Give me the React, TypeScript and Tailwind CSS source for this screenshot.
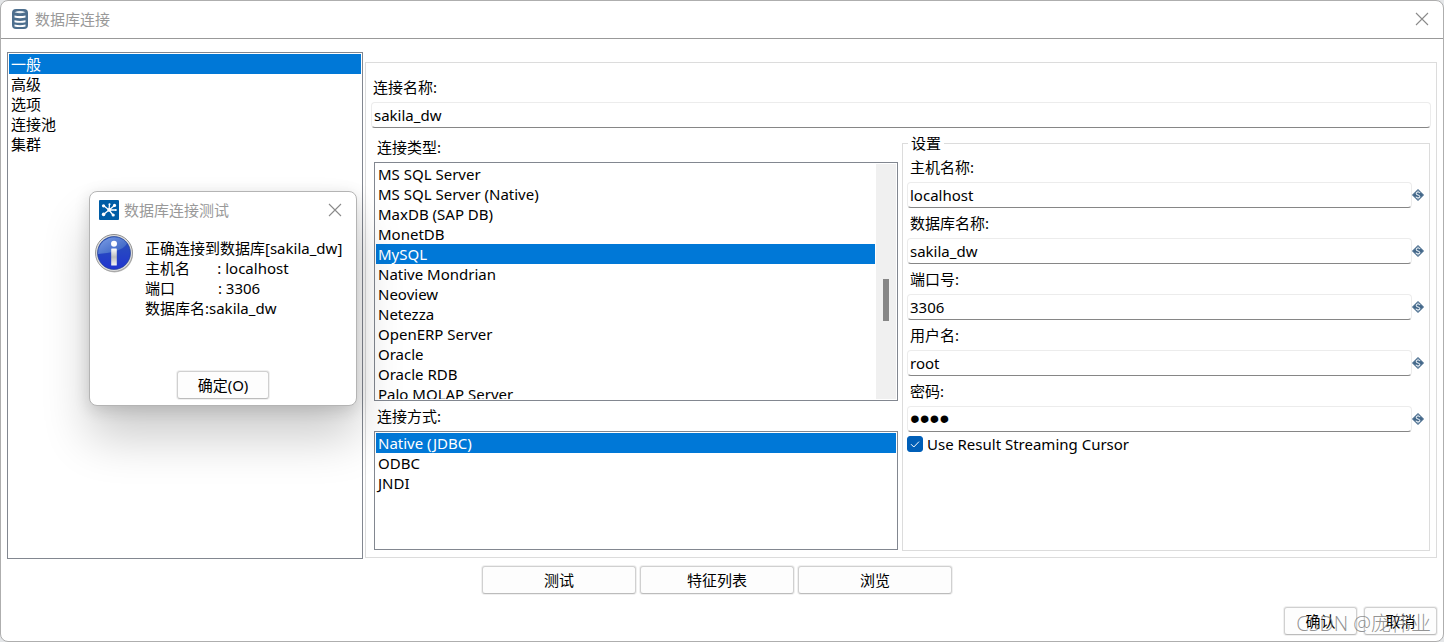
import { useState, type ReactNode } from 'react';

const sections = ['一般', '高级', '选项', '连接池', '集群'];

const connectionTypes = [
  'MS SQL Server',
  'MS SQL Server (Native)',
  'MaxDB (SAP DB)',
  'MonetDB',
  'MySQL',
  'Native Mondrian',
  'Neoview',
  'Netezza',
  'OpenERP Server',
  'Oracle',
  'Oracle RDB',
  'Palo MOLAP Server',
];

const accessMethods = ['Native (JDBC)', 'ODBC', 'JNDI'];

const settings = [
  { id: 'host', label: '主机名称:', value: 'localhost', type: 'text' },
  { id: 'database', label: '数据库名称:', value: 'sakila_dw', type: 'text' },
  { id: 'port', label: '端口号:', value: '3306', type: 'text' },
  { id: 'user', label: '用户名:', value: 'root', type: 'text' },
  { id: 'password', label: '密码:', value: 'root', type: 'password' },
];

const inputClass =
  'h-[26px] w-full min-w-0 flex-1 rounded-sm border border-[#ececec] border-b-[#868686] bg-white px-[2px] outline-none';

function DatabaseIcon() {
  return (
    <svg width="18" height="20" viewBox="0 0 18 20" aria-hidden="true">
      <rect x="1" y="0" width="16" height="20" rx="4" fill="#4d6f8e" />
      <path d="M3.5 3.2Q9 .8 14.5 3.2Q9 5.2 3.5 3.2Z" fill="#e9eff4" />
      <path d="M3.5 6.4Q9 7.8 14.5 6.4V8.6Q9 9.8 3.5 8.6Z" fill="#fff" />
      <path d="M3.5 11.2Q9 12.6 14.5 11.2V13.2Q9 14.4 3.5 13.2Z" fill="#fff" />
      <path d="M3.5 15.6Q9 17 14.5 15.6V17.4Q9 18.8 3.5 17.4Z" fill="#fff" />
    </svg>
  );
}

function HubIcon() {
  return (
    <svg width="20" height="20" viewBox="0 0 20 20" aria-hidden="true">
      <rect width="20" height="20" rx="1" fill="#005da6" />
      <g stroke="#fff" strokeWidth="1.3" fill="none">
        <path d="M10 10L4.5 5.5M10 10L10.5 4M10 10L15.5 5.5M10 10H16.5M10 10L14 15M10 10L4.5 14.5" />
      </g>
      <g fill="#fff">
        <circle cx="10" cy="10" r="1.8" />
        <circle cx="4.5" cy="5.8" r="1.6" />
        <circle cx="10.5" cy="4.2" r="1" />
        <circle cx="15.5" cy="5.4" r="1.6" />
        <circle cx="16.8" cy="10" r="1" />
        <circle cx="14.2" cy="15" r="1.6" />
        <circle cx="4.6" cy="14.4" r="1.8" />
      </g>
    </svg>
  );
}

function InfoIcon() {
  return (
    <svg width="40" height="40" viewBox="0 0 40 40" aria-hidden="true">
      <defs>
        <linearGradient id="info-ring" x1="0" y1="0" x2="0" y2="1">
          <stop offset="0" stopColor="#8c8c8c" />
          <stop offset="1" stopColor="#a5a5a5" />
        </linearGradient>
        <linearGradient id="info-fill" x1="0" y1="0" x2="0" y2="1">
          <stop offset="0" stopColor="#2c55b8" />
          <stop offset="1" stopColor="#2034cf" />
        </linearGradient>
        <linearGradient id="info-gloss" x1="0" y1="0" x2="1" y2="1">
          <stop offset="0" stopColor="#7d9fe6" />
          <stop offset="1" stopColor="#2f59bd" />
        </linearGradient>
        <linearGradient id="info-stem" x1="0" y1="0" x2="0" y2="1">
          <stop offset="0" stopColor="#fff" />
          <stop offset=".5" stopColor="#bdbdbd" />
          <stop offset="1" stopColor="#f4f4f4" />
        </linearGradient>
      </defs>
      <circle cx="20.5" cy="21" r="18.5" fill="#000" opacity=".25" />
      <circle cx="20" cy="20" r="18.5" fill="#dedede" stroke="url(#info-ring)" />
      <circle cx="20" cy="20" r="16.5" fill="url(#info-fill)" stroke="#1d3c8c" strokeWidth=".6" />
      <path d="M4 21A16.2 16.2 0 0 1 33 10.5C29 18 16 20 4 21Z" fill="url(#info-gloss)" />
      <circle cx="20" cy="10.7" r="3" fill="#fff" />
      <rect x="17.2" y="15.5" width="5.6" height="17" rx=".6" fill="url(#info-stem)" />
    </svg>
  );
}

function VariableIcon() {
  return (
    <svg className="shrink-0" width="12" height="12" viewBox="0 0 12 12" aria-hidden="true">
      <path d="M6 .5L11.5 6L6 11.5L.5 6Z" fill="#44688a" stroke="#44688a" strokeLinejoin="round" />
      <path
        d="M8 4.2C7.6 2.6 4.2 2.6 4.2 4.4C4.2 6.2 7.9 5.6 7.9 7.5C7.9 9.3 4.4 9.3 3.9 7.7M6 1.8V3M6 9V10.2"
        fill="none"
        stroke="#dce6ee"
        strokeWidth="1.1"
      />
    </svg>
  );
}

function CloseButton() {
  return (
    <button type="button" aria-label="关闭" className="flex h-5 w-5 items-center justify-center text-[#8a8a8a]">
      <svg width="14" height="14" viewBox="0 0 14 14" fill="none" stroke="currentColor" strokeWidth="1.1">
        <path d="M1 1L13 13M13 1L1 13" />
      </svg>
    </button>
  );
}

function Button({ className, children }: { className: string; children: ReactNode }) {
  return (
    <button
      type="button"
      className={`h-7 rounded-[3px] border border-[#d0d0d0] border-b-[#bcbcbc] bg-[#fdfdfd] leading-5 shadow-[0_0_0_1px_#f0f0f0] ${className}`}
    >
      {children}
    </button>
  );
}

interface ListBoxProps {
  label: string;
  items: string[];
  initial: string;
}

function ListBox({ label, items, initial }: ListBoxProps) {
  const [selected, setSelected] = useState(initial);

  return (
    <ul role="listbox" aria-label={label} className="min-w-0 flex-1 overflow-hidden">
      {items.map((item) => (
        <li
          key={item}
          role="option"
          aria-selected={item === selected}
          onClick={() => setSelected(item)}
          className={`h-5 px-[2px] leading-5 ${item === selected ? 'bg-[#0078d7] text-white' : ''}`}
        >
          {item}
        </li>
      ))}
    </ul>
  );
}

function TestResultDialog() {
  return (
    <div
      role="dialog"
      aria-label="数据库连接测试"
      className="absolute top-[190px] left-[88px] w-[268px] rounded-lg border border-[#b4b4b4] bg-white shadow-[0_32px_48px_rgba(0,0,0,0.2),0_4px_16px_rgba(0,0,0,0.14)]"
    >
      <div className="flex items-center gap-[5px] pt-2 pr-[7px] pl-[9px] text-[#999]">
        <HubIcon />
        <h2 className="flex-1 leading-5">数据库连接测试</h2>
        <div className="flex px-1">
          <CloseButton />
        </div>
      </div>
      <div className="flex items-start gap-[11px] px-1 pt-[13px]">
        <InfoIcon />
        <p className="pt-[5px] leading-5 whitespace-pre">
          {'正确连接到数据库[sakila_dw]\n主机名       : localhost\n端口           : 3306\n数据库名:sakila_dw'}
        </p>
      </div>
      <div className="flex justify-center pt-[53px] pb-[6px]">
        <Button className="w-[92px]">确定(O)</Button>
      </div>
    </div>
  );
}

export default function App() {
  return (
    <div className="min-h-screen bg-[#e4e6e8] font-['Noto_Sans','Noto_Sans_CJK_SC',sans-serif] text-[15px] text-black">
      <div className="relative flex min-h-screen flex-col overflow-hidden rounded-lg border border-[#aeaeae] bg-white">
        <header className="flex h-[38px] items-center gap-[6px] border-b border-[#999] pr-[11px] pb-[2px] pl-[10px] text-[#999]">
          <DatabaseIcon />
          <h1 className="flex-1 leading-5">数据库连接</h1>
          <CloseButton />
        </header>

        <main className="flex flex-1 gap-[2px] px-[6px] pt-[13px]">
          <nav className="flex w-[356px] shrink-0 border border-[#828790] p-px">
            <ListBox label="分类" items={sections} initial="一般" />
          </nav>

          <section className="mt-[10px] mb-px flex min-w-0 flex-1 flex-col border border-[#dcdcdc] px-[5px] pt-[14px] pb-[6px]">
            <label htmlFor="name" className="px-[2px] leading-5">连接名称:</label>
            <div className="mt-[5px] flex">
              <input id="name" defaultValue="sakila_dw" className={inputClass} />
            </div>

            <div className="mt-[5px] grid flex-1 grid-cols-[131fr_132fr] gap-1 pr-px pl-[3px]">
              <div className="flex min-w-0 flex-col gap-[5px] pt-1">
                <h3 className="px-[3px] leading-5">连接类型:</h3>
                <div className="flex h-[239px] gap-px border border-[#828790] p-px">
                  <ListBox label="连接类型" items={connectionTypes} initial="MySQL" />
                  <div className="w-5 bg-[#f0f0f0] px-[7px] pt-[115px]">
                    <div className="h-[42px] bg-[#868686]" />
                  </div>
                </div>
                <h3 className="px-[3px] leading-5">连接方式:</h3>
                <div className="flex h-[119px] border border-[#828790] p-px">
                  <ListBox label="连接方式" items={accessMethods} initial="Native (JDBC)" />
                </div>
              </div>

              <fieldset className="min-w-0 border border-[#dcdcdc] pr-[5px] pl-1">
                <legend className="ml-px px-[3px] leading-5">设置</legend>
                <div className="flex flex-col gap-[5px] pt-1">
                  {settings.map((field) => (
                    <div key={field.id} className="flex flex-col gap-[5px]">
                      <label htmlFor={field.id} className="px-[3px] leading-5">{field.label}</label>
                      <div className="flex items-center">
                        <input
                          id={field.id}
                          type={field.type}
                          defaultValue={field.value}
                          className={`${inputClass} ${field.type === 'password' ? "font-['Liberation_Sans',sans-serif] text-[28px]" : ''}`}
                        />
                        <VariableIcon />
                      </div>
                    </div>
                  ))}
                </div>
                <label className="mt-[2px] flex items-center gap-1 leading-5">
                  <span className="relative flex h-4 w-4">
                    <input
                      type="checkbox"
                      defaultChecked
                      className="peer h-4 w-4 appearance-none rounded-[3px] border border-[#868686] checked:border-[#005fb8] checked:bg-[#005fb8]"
                    />
                    <svg
                      className="pointer-events-none absolute inset-0 hidden peer-checked:block"
                      width="16"
                      height="16"
                      viewBox="0 0 16 16"
                      fill="none"
                      stroke="#fff"
                      aria-hidden="true"
                    >
                      <path d="M4 8.2L6.8 11L12 5.6" />
                    </svg>
                  </span>
                  Use Result Streaming Cursor
                </label>
              </fieldset>
            </div>
          </section>
        </main>

        <div className="flex justify-center gap-1 pt-[7px] pr-[10px]">
          <Button className="w-[154px]">测试</Button>
          <Button className="w-[154px]">特征列表</Button>
          <Button className="w-[154px]">浏览</Button>
        </div>

        <footer className="flex justify-end gap-[7px] px-[6px] pt-[13px] pb-[6px]">
          <Button className="w-[73px]">确认</Button>
          <Button className="w-[73px]">取消</Button>
        </footer>

        <TestResultDialog />

        <div className="pointer-events-none absolute right-3 bottom-[5px] font-['Open_Sans','Noto_Sans_CJK_SC',sans-serif] text-[20px] leading-6 font-light text-[#777]/80">
          CSDN @庞伟业
        </div>
      </div>
    </div>
  );
}
